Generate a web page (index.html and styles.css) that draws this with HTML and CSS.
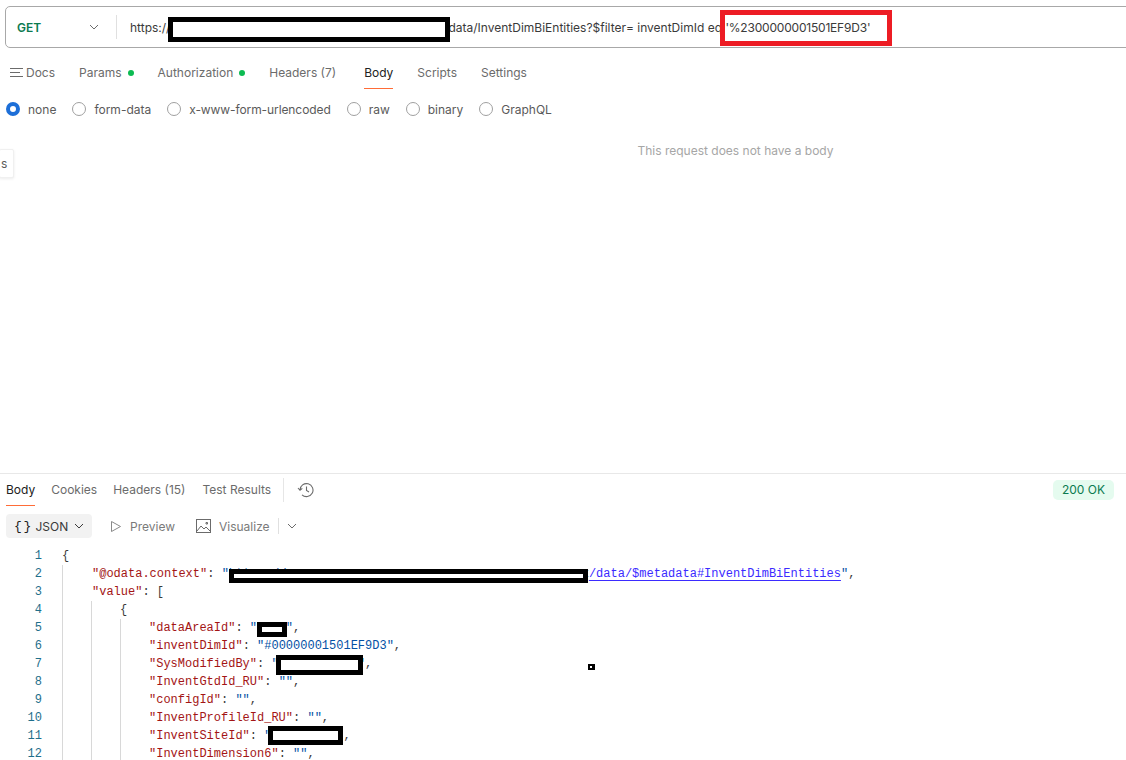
FILE: index.html
```html
<!DOCTYPE html>
<html lang="en">
<head>
<meta charset="utf-8">
<title>GET InventDimBiEntities</title>
<link rel="stylesheet" href="styles.css">
</head>
<body>
<div class="page">
  <section class="request">
    <div class="urlbar">
      <div class="method"><span class="method-name">GET</span>
        <svg class="chev" width="10" height="6" viewBox="0 0 10 6"><path d="M1 1l4 4 4-4" fill="none" stroke="#6b6b6b" stroke-width="1"/></svg>
      </div>
      <div class="url">https://<span class="url-hidden"></span>data/InventDimBiEntities?$filter= inventDimId eq <span class="url-value">'%2300000001501EF9D3'</span></div>
    </div>
    <nav class="tabs">
      <span class="tab tab-docs"><svg width="15" height="12" viewBox="0 0 15 12"><path d="M0 1.5h13M0 5.5h10M0 9.5h13" fill="none" stroke="#6b6b6b" stroke-width="1"/></svg>Docs</span>
      <span class="tab">Params<i class="dot"></i></span>
      <span class="tab">Authorization<i class="dot"></i></span>
      <span class="tab tab-headers">Headers (7)</span>
      <span class="tab active">Body</span>
      <span class="tab">Scripts</span>
      <span class="tab">Settings</span>
    </nav>
    <div class="radios">
      <label class="radio on"><i></i>none</label>
      <label class="radio"><i></i>form-data</label>
      <label class="radio radio-long"><i></i>x-www-form-urlencoded</label>
      <label class="radio"><i></i>raw</label>
      <label class="radio"><i></i>binary</label>
      <label class="radio"><i></i>GraphQL</label>
    </div>
    <p class="empty">This request does not have a body</p>
    <div class="peek">s</div>
  </section>

  <section class="response">
    <div class="res-head">
      <span class="rtab active">Body</span>
      <span class="rtab">Cookies</span>
      <span class="rtab rtab-headers">Headers (15)</span>
      <span class="rtab">Test Results</span>
      <span class="sep"></span>
      <svg class="hist" width="17" height="16" viewBox="0 0 17 16"><path d="M3 8a6.500 6.500 0 1 1 2 4.800M1 6l2 2.300 2.300-2M9.500 4.500v4l2.500 1.500" fill="none" stroke="#6b6b6b" stroke-width="1.100"/></svg>
      <span class="status">200 OK</span>
    </div>
    <div class="res-tools">
      <span class="json"><b>{ }</b>JSON<svg width="10" height="6" viewBox="0 0 10 6"><path d="M1 1l4 4 4-4" fill="none" stroke="#3a3a3a" stroke-width="1"/></svg></span>
      <span class="tool tool-preview"><svg width="12" height="13" viewBox="0 0 12 13"><path d="M1.500 1.500v10l9-5z" fill="none" stroke="#8a8a8a" stroke-width="1"/></svg>Preview</span>
      <span class="tool"><svg width="15" height="14" viewBox="0 0 15 14"><rect x=".5" y=".5" width="14" height="13" fill="none" stroke="#6b6b6b"/><path d="M1 12l4-5 3 3 2-2 4 4M10 3.500h1.500v1.500H10z" fill="none" stroke="#6b6b6b"/></svg>Visualize</span>
      <span class="sep2"></span>
      <svg width="10" height="6" viewBox="0 0 10 6"><path d="M1 1l4 4 4-4" fill="none" stroke="#6b6b6b" stroke-width="1"/></svg>
    </div>
    <div class="code">
      <div class="ln"><span class="no">1</span><span class="p">{</span></div>
      <div class="ln g1"><span class="no">2</span><span class="k">"@odata.context"</span><span class="p">: </span><span class="s">"https://xxxxxxxxxxxxxxxxxxxxxxxxxxxxxxxxxxxxxxxxxx</span><span class="link">/data/$metadata#InventDimBiEntities</span><span class="s">"</span><span class="p">,</span></div>
      <div class="ln g1"><span class="no">3</span><span class="k">"value"</span><span class="p">: [</span></div>
      <div class="ln g2"><span class="no">4</span><span class="p">{</span></div>
      <div class="ln g3"><span class="no">5</span><span class="k">"dataAreaId"</span><span class="p">: </span><span class="s">"    "</span><span class="p">,</span></div>
      <div class="ln g3"><span class="no">6</span><span class="k">"inventDimId"</span><span class="p">: </span><span class="s">"#00000001501EF9D3"</span><span class="p">,</span></div>
      <div class="ln g3"><span class="no">7</span><span class="k">"SysModifiedBy"</span><span class="p">: </span><span class="s">"           "</span><span class="p">,</span></div>
      <div class="ln g3"><span class="no">8</span><span class="k">"InventGtdId_RU"</span><span class="p">: </span><span class="s">""</span><span class="p">,</span></div>
      <div class="ln g3"><span class="no">9</span><span class="k">"configId"</span><span class="p">: </span><span class="s">""</span><span class="p">,</span></div>
      <div class="ln g3"><span class="no">10</span><span class="k">"InventProfileId_RU"</span><span class="p">: </span><span class="s">""</span><span class="p">,</span></div>
      <div class="ln g3"><span class="no">11</span><span class="k">"InventSiteId"</span><span class="p">: </span><span class="s">"         "</span><span class="p">,</span></div>
      <div class="ln g3"><span class="no">12</span><span class="k">"InventDimension6"</span><span class="p">: </span><span class="s">""</span><span class="p">,</span></div>
    </div>
  </section>

  <i class="mark mark-url"></i>
  <i class="mark mark-red"></i>
  <i class="mark mark-ctx"></i>
  <i class="mark mark-area"></i>
  <i class="mark mark-sys"></i>
  <i class="mark mark-site"></i>
  <i class="mark mark-speck"></i>
</div>
</body>
</html>
```
FILE: styles.css
```css
* { box-sizing: border-box; }
html, body { margin: 0; height: 100%; background: #fff; overflow: hidden; }
body { font-family: Inter, "Noto Sans", sans-serif; font-size: 12px; color: #6b6b6b; }
.page { position: relative; height: 760px; display: flex; flex-direction: column; overflow: hidden; }

.request { position: relative; height: 473px; padding: 6px 0 0 5px; flex: none; }
.urlbar { display: flex; align-items: center; height: 42px; width: 1140px; border: 1px solid #a8a8a8; border-radius: 5px; }
.method { width: 111px; height: 24px; padding: 0 17px 0 11px; display: flex; align-items: center; justify-content: space-between; border-right: 1px solid #e0e0e0; }
.method-name { font-weight: 600; font-size: 12px; color: #0b7a50; margin-top: 1px; }
.url { padding-left: 13px; color: #3a3a3a; white-space: pre; }
.url-hidden { display: inline-block; width: 278px; }
.url-value { letter-spacing: -.2px; }

.tabs { display: flex; align-items: center; height: 20px; margin-top: 15px; margin-left: 5px; gap: 24px; }
.tab { display: flex; align-items: center; position: relative; line-height: 20px; }
.tab-docs { gap: 1px; }
.tab-headers { margin-right: 4px; }
.dot { width: 6px; height: 6px; border-radius: 50%; background: #0cbb52; margin-left: 6px; }
.tab.active { color: #212121; }
.tab.active::after { content: ""; position: absolute; left: 0; right: 0; bottom: -6px; height: 1px; background: #ff6c37; }

.radios { display: flex; align-items: center; height: 20px; margin-top: 16px; margin-left: 1px; gap: 16px; }
.radio { display: flex; align-items: center; gap: 8px; color: #5a5a5a; }
.radio-long { letter-spacing: -.09px; }
.radio i { width: 14px; height: 14px; border: 1px solid #a0a0a0; border-radius: 50%; }
.radio.on i { border: 4px solid #1d6fd8; background: #fff; }

.empty { margin: 22px 0 0; text-align: center; padding-left: 340px; color: #a6a6a6; line-height: 20px; }
.peek { position: absolute; left: -1px; top: 149px; width: 15px; height: 29px; background: #fff; border: 1px solid #f0f0f0; border-radius: 2px; box-shadow: 0 1px 3px rgba(0,0,0,.08); padding-left: 1px; line-height: 27px; color: #5a5a5a; }

.response { border-top: 1px solid #e8e8e8; flex: 1; min-height: 0; }
.res-head { display: flex; align-items: center; height: 32px; padding: 0 12px 0 6px; }
.rtab { position: relative; line-height: 20px; margin-right: 16px; }
.rtab-headers { margin-right: 17px; }
.rtab.active { color: #212121; }
.rtab.active::after { content: ""; position: absolute; left: 0; right: 0; bottom: -6px; height: 1px; background: #ff6c37; }
.sep { width: 1px; height: 24px; background: #e6e6e6; margin: 0 13px 0 -4px; }
.status { margin-left: auto; background: #e5fbef; color: #0b7a50; border-radius: 5px; padding: 0 9px; line-height: 20px; }

.res-tools { display: flex; align-items: center; height: 24px; margin: 8px 0 0 6px; }
.json { display: flex; align-items: center; width: 86px; height: 24px; padding-left: 8px; background: #f2f2f2; border-radius: 4px; color: #3a3a3a; margin-right: 18px; white-space: nowrap; }
.json b { font-family: "Liberation Mono", monospace; font-weight: 400; font-size: 13px; color: #212121; letter-spacing: -3px; margin-right: 7px; white-space: pre; }
.json svg { margin-left: 6px; }
.tool { display: flex; align-items: center; gap: 8px; color: #7a7a7a; }
.tool-preview { margin-right: 21px; }
.sep2 { width: 1px; height: 16px; background: #e0e0e0; margin: 0 8px 0 8px; }

.code { margin-top: 9px; font-family: "Liberation Mono", "DejaVu Sans Mono", monospace; font-size: 12px; line-height: 18px; }
.ln { position: relative; height: 18px; padding-left: 62px; white-space: pre; }
.no { position: absolute; left: 0; width: 42px; text-align: right; color: #1f6f8b; }
.g1 { padding-left: 92px; }
.g2 { padding-left: 120px; }
.g3 { padding-left: 149px; }
.g1::before, .g2::before, .g3::before { content: ""; position: absolute; top: 0; bottom: 0; left: 62px; border-left: 1px solid #d8d8d8; }
.g2::after, .g3::after { content: ""; position: absolute; top: 0; bottom: 0; left: 91px; border-left: 1px solid #d8d8d8; }
.g3 .no::after { content: ""; position: absolute; top: 0; bottom: 0; left: 120px; border-left: 1px solid #d8d8d8; }
.k { color: #a31515; }
.s { color: #0451a5; }
.p { color: #3a3a3a; }
.link { color: #3b2bff; text-decoration: underline; text-underline-offset: 3px; }

.mark { position: absolute; display: block; border: 5px solid #000; background: #fff; }
.mark-url { left: 168px; top: 17px; width: 282px; height: 25px; }
.mark-red { left: 720px; top: 10px; width: 172px; height: 36px; border-color: #ed1c24; background: transparent; }
.mark-ctx { left: 229px; top: 569px; width: 359px; height: 14px; }
.mark-area { left: 257px; top: 622px; width: 30px; height: 15px; }
.mark-sys { left: 276px; top: 655px; width: 87px; height: 20px; }
.mark-site { left: 268px; top: 726px; width: 75px; height: 19px; }
.mark-speck { left: 588px; top: 664px; width: 7px; height: 6px; border-width: 2px 3px 2px 2px; }
```
